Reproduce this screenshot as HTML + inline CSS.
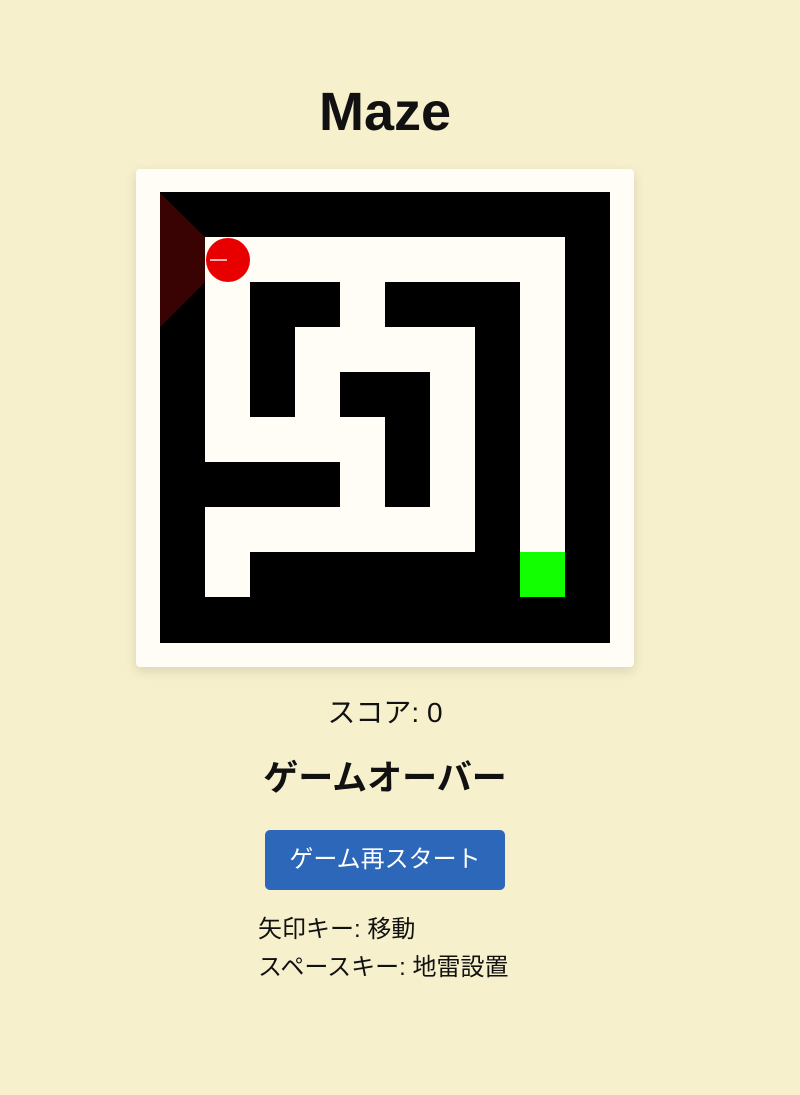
<!DOCTYPE html>
<html><head><meta charset="utf-8"><style>
html,body{margin:0;padding:0}
body{width:800px;height:1095px;background:#f6f0cc;font-family:"Liberation Sans","Noto Sans CJK JP",sans-serif;color:#111;position:relative;overflow:hidden}
h1{position:absolute;top:80px;left:0;width:770px;text-align:center;margin:0;font-size:54px;line-height:64px;font-weight:bold}
.card{position:absolute;left:136px;top:169px;width:498px;height:498px;background:#fffdf6;border-radius:4px;box-shadow:0 4px 12px rgba(0,0,0,0.12)}
.t{position:absolute;left:0;width:770px;text-align:center}
.btn{position:absolute;left:265px;top:830px;width:240px;height:60px;background:#2c67b9;border-radius:5px;color:#fff;font-size:24px;line-height:60px;text-align:center}
.ins{position:absolute;left:258px;font-size:24px;line-height:30px}
</style></head><body>
<h1>Maze</h1>
<div class="card"></div>
<svg style="position:absolute;left:0;top:0" width="800" height="700">
<rect x="160" y="192" width="450" height="451" fill="#000"/>
<g fill="#fffdf6">
<rect x="205" y="237" width="360" height="45"/>
<rect x="520" y="237" width="45" height="315"/>
<rect x="205" y="237" width="45" height="225"/>
<rect x="340" y="282" width="45" height="45"/>
<rect x="295" y="327" width="180" height="45"/>
<rect x="295" y="372" width="45" height="45"/>
<rect x="430" y="372" width="45" height="180"/>
<rect x="205" y="417" width="180" height="45"/>
<rect x="340" y="462" width="45" height="45"/>
<rect x="205" y="507" width="270" height="45"/>
<rect x="205" y="552" width="45" height="45"/>
</g>
<rect x="520" y="552" width="45" height="45" fill="#11ff00"/>
<polygon points="160,193 205,237 205,282 160,327" fill="#3a0303"/>
<circle cx="228" cy="260" r="22" fill="#e80000"/>
<rect x="210" y="259" width="17" height="2" fill="#ffb0b0"/>
</svg>
<div class="t" style="top:694px;font-size:28px;line-height:38px">スコア: 0</div>
<div class="t" style="top:757px;font-size:35px;line-height:44px;font-weight:bold">ゲームオーバー</div>
<div class="btn">ゲーム再スタート</div>
<div class="ins" style="top:915px">矢印キー: 移動</div>
<div class="ins" style="top:953px">スペースキー: 地雷設置</div>
</body></html>
